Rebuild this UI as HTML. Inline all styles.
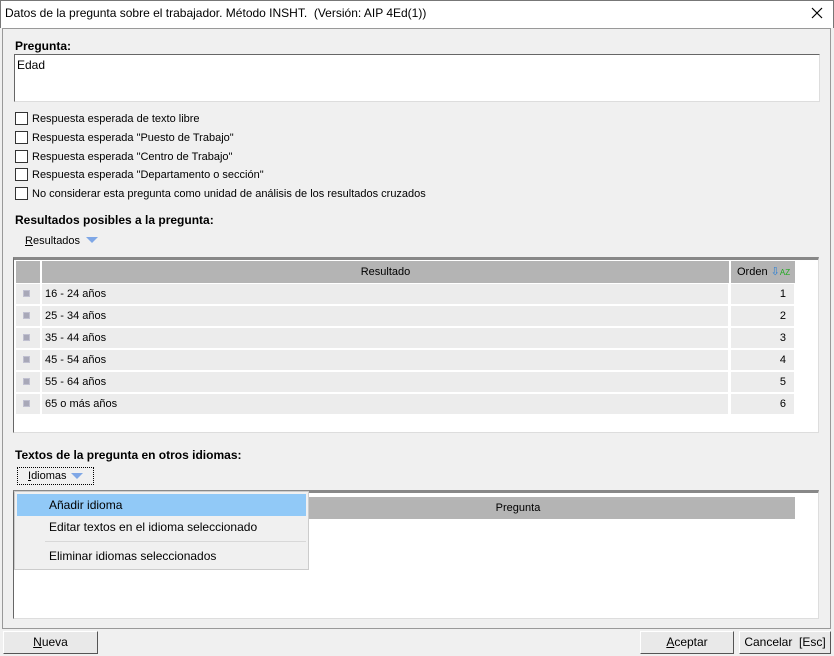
<!DOCTYPE html>
<html><head><meta charset="utf-8"><style>
*{box-sizing:border-box}
body{margin:0;width:834px;height:656px;background:#f0f0f0;font-family:"Liberation Sans",sans-serif;font-size:11px;color:#000;position:relative;overflow:hidden}
.a{position:absolute}
.b{font-weight:bold;font-size:12px}
.cb{position:absolute;left:15px;width:13px;height:13px;border:1px solid #333;background:#fff}
.cl{position:absolute;left:32px}
.hdr{position:absolute;background:#b4b4b4;height:22px}
.row{position:absolute;background:#ececec;height:20px}
.sq{position:absolute;left:23px;width:7px;height:7px;background:#a8a8b8;border:1px solid #c0c0d0}
.btn{position:absolute;top:631px;height:23px;background:#e9e9e9;border:1px solid;border-color:#fff #555 #555 #fff;text-align:center;line-height:21px;font-size:12px}
</style></head><body>
<div class="a" style="left:0;top:0;width:834px;height:28px;background:#fff;border:1px solid #777;border-bottom:none"></div>
<div class="a" style="left:5px;top:6px;font-size:12px">Datos de la pregunta sobre el trabajador. Método INSHT.&nbsp; (Versión: AIP 4Ed(1))</div>
<svg class="a" style="left:811px;top:7px" width="12" height="12"><path d="M1 1L11 11M11 1L1 11" stroke="#000" stroke-width="1.2"/></svg>
<div class="a" style="left:2px;top:28px;width:829px;height:601px;border:1px solid #999"></div>
<div class="a b" style="left:15px;top:39px">Pregunta:</div>
<div class="a" style="left:14px;top:54px;width:806px;height:48px;background:#fff;border:1px solid;border-color:#666 #ddd #ddd #666"></div>
<div class="a" style="left:17px;top:58px;font-size:12px">Edad</div>
<div class="cb" style="top:112px"></div><div class="cl" style="top:113px">Respuesta esperada de texto libre</div>
<div class="cb" style="top:131px"></div><div class="cl" style="top:132px">Respuesta esperada "Puesto de Trabajo"</div>
<div class="cb" style="top:150px"></div><div class="cl" style="top:151px">Respuesta esperada "Centro de Trabajo"</div>
<div class="cb" style="top:168px"></div><div class="cl" style="top:169px">Respuesta esperada "Departamento o sección"</div>
<div class="cb" style="top:187px"></div><div class="cl" style="top:188px">No considerar esta pregunta como unidad de análisis de los resultados cruzados</div>
<div class="a b" style="left:15px;top:213px">Resultados posibles a la pregunta:</div>
<div class="a" style="left:25px;top:235px"><u>R</u>esultados</div>
<svg class="a" style="left:86px;top:237px" width="12" height="7"><path d="M0 0H12L6 6Z" fill="#7fa7e6"/></svg>
<div class="a" style="left:13px;top:257px;width:806px;height:176px;background:#fff;border:1px solid;border-color:#666 #ddd #ddd #666;border-top:3px solid #888"></div>
<div class="hdr" style="left:16px;top:261px;width:24px"></div>
<div class="hdr" style="left:42px;top:261px;width:687px;text-align:center;line-height:22px">Resultado</div>
<div class="hdr" style="left:731px;top:261px;width:64px;line-height:22px;padding-left:6px">Orden <span style="color:#2a7fd4">⇩</span><span style="color:#2a2;font-size:8px">AZ</span></div>
<div class="row" style="left:16px;top:284px;width:24px"></div><div class="sq" style="top:290px"></div><div class="row" style="left:42px;top:284px;width:686px;padding:4px 3px">16 - 24 años</div><div class="row" style="left:731px;top:284px;width:63px;text-align:right;padding:4px 8px">1</div>
<div class="row" style="left:16px;top:306px;width:24px"></div><div class="sq" style="top:312px"></div><div class="row" style="left:42px;top:306px;width:686px;padding:4px 3px">25 - 34 años</div><div class="row" style="left:731px;top:306px;width:63px;text-align:right;padding:4px 8px">2</div>
<div class="row" style="left:16px;top:328px;width:24px"></div><div class="sq" style="top:334px"></div><div class="row" style="left:42px;top:328px;width:686px;padding:4px 3px">35 - 44 años</div><div class="row" style="left:731px;top:328px;width:63px;text-align:right;padding:4px 8px">3</div>
<div class="row" style="left:16px;top:350px;width:24px"></div><div class="sq" style="top:356px"></div><div class="row" style="left:42px;top:350px;width:686px;padding:4px 3px">45 - 54 años</div><div class="row" style="left:731px;top:350px;width:63px;text-align:right;padding:4px 8px">4</div>
<div class="row" style="left:16px;top:372px;width:24px"></div><div class="sq" style="top:378px"></div><div class="row" style="left:42px;top:372px;width:686px;padding:4px 3px">55 - 64 años</div><div class="row" style="left:731px;top:372px;width:63px;text-align:right;padding:4px 8px">5</div>
<div class="row" style="left:16px;top:394px;width:24px"></div><div class="sq" style="top:400px"></div><div class="row" style="left:42px;top:394px;width:686px;padding:4px 3px">65 o más años</div><div class="row" style="left:731px;top:394px;width:63px;text-align:right;padding:4px 8px">6</div>
<div class="a b" style="left:15px;top:448px">Textos de la pregunta en otros idiomas:</div>
<div class="a" style="left:17px;top:467px;width:77px;height:18px;border:1px dotted #000"></div>
<div class="a" style="left:28px;top:470px"><u>I</u>diomas</div>
<svg class="a" style="left:71px;top:473px" width="12" height="7"><path d="M0 0H12L6 6Z" fill="#7fa7e6"/></svg>
<div class="a" style="left:13px;top:490px;width:806px;height:129px;background:#fff;border:1px solid;border-color:#666 #ddd #ddd #666;border-top:3px solid #888"></div>
<div class="hdr" style="left:16px;top:497px;width:779px;text-align:center;line-height:22px;padding-left:225px">Pregunta</div>
<div class="a" style="left:14px;top:491px;width:295px;height:79px;background:#f0f0f0;border:1px solid #ccc"></div>
<div class="a" style="left:17px;top:494px;width:289px;height:22px;background:#91c9f7"></div>
<div class="a" style="left:49px;top:498px;font-size:12px">Añadir idioma</div>
<div class="a" style="left:49px;top:520px;font-size:12px">Editar textos en el idioma seleccionado</div>
<div class="a" style="left:45px;top:541px;width:261px;height:1px;background:#d8d8d8"></div>
<div class="a" style="left:49px;top:549px;font-size:12px">Eliminar idiomas seleccionados</div>
<div class="btn" style="left:3px;width:95px"><u>N</u>ueva</div>
<div class="btn" style="left:640px;width:94px"><u>A</u>ceptar</div>
<div class="btn" style="left:739px;width:92px">Cancelar&nbsp; [Esc]</div>
</body></html>
